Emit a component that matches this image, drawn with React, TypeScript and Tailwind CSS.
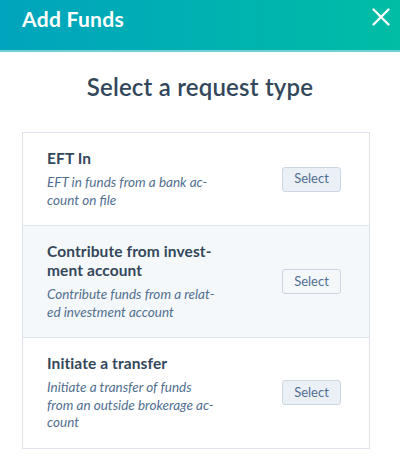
import { X } from 'lucide-react';

const rows = [
  {
    id: 'eft',
    title: ['EFT In'],
    desc: ['EFT in funds from a bank ac-', 'count on file'],
    active: false,
  },
  {
    id: 'contribute',
    title: ['Contribute from invest-', 'ment account'],
    desc: ['Contribute funds from a relat-', 'ed investment account'],
    active: true,
  },
  {
    id: 'transfer',
    title: ['Initiate a transfer'],
    desc: ['Initiate a transfer of funds', 'from an outside brokerage ac-', 'count'],
    active: false,
  },
];

export default function App() {
  return (
    <div
      className="w-[400px] h-[464px] bg-white overflow-hidden"
      style={{ fontFamily: 'Lato, "Open Sans", sans-serif' }}
    >
      {/* Header */}
      <div className="h-[52px] flex items-start justify-between pl-[22px] pr-[4px] pt-[2px] bg-gradient-to-r from-[#00a4bd] to-[#00bda5] border-b-2 border-[#6fd0d6]">
        <h1 className="text-[21px] font-bold text-white tracking-[0.3px] leading-[28px] mt-[3px]">Add Funds</h1>
        <X className="w-[30px] h-[30px] text-white" strokeWidth={1.9} />
      </div>

      {/* Body */}
      <div className="px-[22px]">
        <h2 className="text-center text-[24px] font-semibold text-[#33475b] mt-[17px] mb-[27px] leading-[36px] tracking-[0.2px]">
          Select a request type
        </h2>

        <div className="w-[348px] border border-[#dfe3eb] bg-white">
          {rows.map((row, i) => (
            <div
              key={row.id}
              className={`flex items-center justify-between pl-[24px] pr-[28px] pt-[16px] pb-[16px] ${
                i > 0 ? 'border-t border-[#dfe3eb]' : ''
              } ${row.active ? 'bg-[#f5f8fa]' : 'bg-white'}`}
            >
              <div>
                <div className="text-[15.5px] font-bold text-[#33475b] leading-[19px] tracking-[0.1px]">
                  {row.title.map((t) => (
                    <div key={t}>{t}</div>
                  ))}
                </div>
                <div className="mt-[6px] text-[13.5px] italic text-[#516f90] leading-[17.5px]">
                  {row.desc.map((d) => (
                    <div key={d}>{d}</div>
                  ))}
                </div>
              </div>
              <button
                className={`w-[59px] h-[25px] rounded-[3px] border border-[#cbd6e2] text-[13px] text-[#506e91] ${
                  row.active ? 'bg-[#f5f8fa]' : 'bg-[#eaf0f6]'
                }`}
              >
                Select
              </button>
            </div>
          ))}
        </div>
      </div>
    </div>
  );
}
